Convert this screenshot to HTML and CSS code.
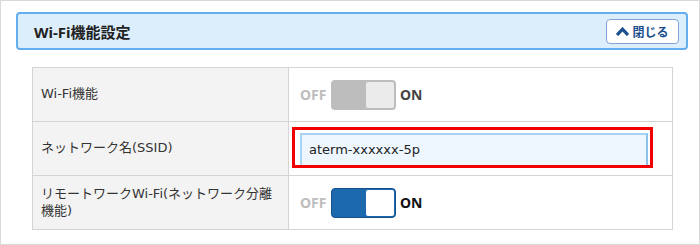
FILE: index.html
```html
<!DOCTYPE html>
<html lang="ja">
<head>
    <meta charset="UTF-8">
    <title>Wi-Fi機能設定</title>
    <link rel="stylesheet" href="styles.css">
</head>
<body>

    <div class="frame">
        <div class="section-head">
            <h2>Wi-Fi機能設定</h2>
            <button class="close-btn">
                <svg width="13" height="9" viewBox="0 0 13 9"><polyline points="1,8 6.5,2.2 12,8" fill="none" stroke="#1b4f8e" stroke-width="3.2"/></svg>
                閉じる
            </button>
        </div>

        <table class="settings">
            <tr>
                <th>Wi-Fi機能</th>
                <td>
                    <div class="switch">
                        <span class="off">OFF</span>
                        <span class="track disabled"><span class="knob"></span></span>
                        <span class="on">ON</span>
                    </div>
                </td>
            </tr>
            <tr>
                <th>ネットワーク名(SSID)</th>
                <td class="ssid-cell">
                    <input class="text-input" type="text" value="aterm-xxxxxx-5p">
                    <div class="highlight"></div>
                </td>
            </tr>
            <tr>
                <th>リモートワークWi-Fi(ネットワーク分離機能)</th>
                <td>
                    <div class="switch">
                        <span class="off">OFF</span>
                        <span class="track active"><span class="knob"></span></span>
                        <span class="on dark">ON</span>
                    </div>
                </td>
            </tr>
        </table>
    </div>

</body>
</html>
```

FILE: styles.css
```css
body {
    margin: 0;
    background-color: #ffffff;
    font-family: 'DejaVu Sans', 'Noto Sans CJK JP', sans-serif;
    color: #333333;
}

.frame {
    box-sizing: border-box;
    width: 700px;
    height: 245px;
    border: 1px solid #d9d9d9;
    padding: 11px 11px 0 15px;
}

.section-head {
    box-sizing: border-box;
    height: 38px;
    background-color: #dcedfc;
    border: 2px solid #62aef0;
    border-radius: 4px;
    display: flex;
    align-items: center;
    justify-content: space-between;
    padding: 0 7px 0 16px;
}

h2 {
    margin: 0;
    font-family: 'Noto Sans', 'Noto Sans CJK JP', sans-serif;
    font-size: 15px;
    font-weight: bold;
    color: #222222;
}

.close-btn {
    box-sizing: border-box;
    width: 73px;
    height: 25px;
    background-color: #ffffff;
    border: 1px solid #7fa6d6;
    border-radius: 4px;
    display: flex;
    align-items: center;
    justify-content: center;
    gap: 3px;
    padding: 0;
    font-family: 'Noto Sans CJK JP', sans-serif;
    font-size: 12px;
    font-weight: bold;
    color: #1b4f8e;
}

.settings {
    margin: 17px 0 0 16px;
    width: 641px;
    border-collapse: collapse;
}

.settings th,
.settings td {
    height: 53px;
    border: 1px solid #d4d4d4;
    padding: 0;
}

.settings th {
    box-sizing: border-box;
    width: 256px;
    background-color: #f3f3f3;
    font-size: 13px;
    font-weight: normal;
    text-align: left;
    line-height: 17px;
    padding: 0 10px 2px 8px;
    color: #333333;
}

.settings td {
    padding-left: 11px;
}

.switch {
    display: flex;
    align-items: center;
    font-family: 'Noto Sans', sans-serif;
    font-size: 14px;
    font-weight: bold;
}

.off {
    color: #bdbdbd;
    width: 31px;
}

.on {
    color: #444444;
    margin-left: 4px;
}

.on.dark {
    color: #111111;
}

.track {
    box-sizing: border-box;
    width: 65px;
    height: 30px;
    border-radius: 4px;
    display: flex;
    justify-content: flex-end;
    padding: 2px;
}

.track.disabled {
    background-color: #bdbdbd;
}

.track.disabled .knob {
    background-color: #ebebeb;
}

.track.active {
    background-color: #1c69ae;
    border: 1px solid #14518a;
    padding: 1px;
}

.track.active .knob {
    background-color: #ffffff;
}

.knob {
    width: 28px;
    height: 26px;
    border-radius: 2px;
}

.ssid-cell {
    position: relative;
}

.text-input {
    box-sizing: border-box;
    width: 348px;
    height: 34px;
    background-color: #eef7ff;
    border: 2px solid #a9d3f2;
    border-right-color: #8cc3ec;
    padding: 0 7px;
    font-family: inherit;
    font-size: 13px;
    color: #222222;
    margin-top: 2px;
}

.highlight {
    position: absolute;
    left: 3px;
    top: 5px;
    width: 361px;
    height: 41px;
    box-sizing: border-box;
    border: 3px solid #f20000;
}
```
